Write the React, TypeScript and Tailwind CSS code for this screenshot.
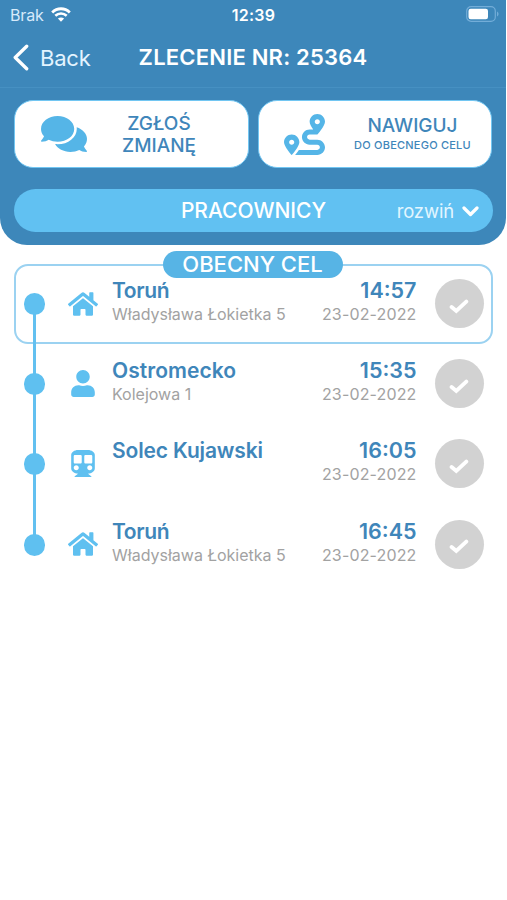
import React from "react";
import { FaComments, FaRoute, FaHome, FaUser, FaSubway } from "react-icons/fa";

type Stop = {
  icon: React.ComponentType<{ className?: string }>;
  iconClass: string;
  city: string;
  cityClass: string;
  address: string;
  time: string;
};

const stops: Stop[] = [
  { icon: FaHome, iconClass: "h-[30px] w-[30px]", city: "Toruń", cityClass: "tracking-[-0.35px]", address: "Władysława Łokietka 5", time: "14:57" },
  { icon: FaUser, iconClass: "h-[27px] w-6", city: "Ostromecko", cityClass: "tracking-[0.05px]", address: "Kolejowa 1", time: "15:35" },
  { icon: FaSubway, iconClass: "h-[27px] w-6", city: "Solec Kujawski", cityClass: "tracking-[-0.15px]", address: "", time: "16:05" },
  { icon: FaHome, iconClass: "h-[30px] w-[30px]", city: "Toruń", cityClass: "tracking-[-0.35px]", address: "Władysława Łokietka 5", time: "16:45" },
];

function StatusBar() {
  return (
    <div className="grid h-[29px] grid-cols-3 items-center pr-[9px] pl-[10px]">
      <div className="flex items-center gap-[7px]">
        <span className="text-[16px] leading-5 tracking-[-0.15px] text-[#d6eafa]">Brak</span>
        <svg className="h-[15px] w-5" viewBox="0 0 20 15" fill="none">
          <path d="M1.2 5.4C6.2.5 13.8.5 18.8 5.4" stroke="white" strokeWidth="2.8" />
          <path d="M4.3 8.8c3.3-3.1 8.1-3.1 11.4 0" stroke="white" strokeWidth="2.6" />
          <path d="M10 14.7 6.9 11.6c1.8-1.6 4.4-1.6 6.2 0Z" fill="white" />
        </svg>
      </div>
      <span className="text-center text-[16px] leading-5 font-semibold tracking-[0.2px] text-white">12:39</span>
      <svg className="mt-[-2px] mr-[-2px] h-4 w-[33px] justify-self-end" viewBox="0 0 33 16" fill="none">
        <rect x=".7" y=".7" width="28.6" height="14.6" rx="4.4" stroke="#73add8" strokeWidth="1.2" />
        <rect x="2.5" y="2.7" width="19.5" height="10.6" rx="2.2" fill="white" />
        <path d="M31 5.5c2 .8 2 4.2 0 5Z" fill="#73add8" />
      </svg>
    </div>
  );
}

function StopRow({ stop, first, last }: { stop: Stop; first: boolean; last: boolean }) {
  const Icon = stop.icon;
  return (
    <div className={`flex h-[80.2px] rounded-[14px] border-2 pl-[8px] ${first ? "border-[#9bd2f1]" : "border-transparent"}`}>
      <div className="relative flex w-[21px] justify-center">
        {!first && <div className="absolute -top-[3px] h-[41px] w-[3px] bg-[#62c0f0]" />}
        {!last && <div className="absolute top-[38px] h-[42px] w-[3px] bg-[#62c0f0]" />}
        <div className="relative mt-[27px] h-[22px] w-[21px] rounded-full bg-[#5fc0f0]" />
      </div>
      <div className="ml-[22px] flex h-[75px] w-[31px] items-center justify-center">
        <Icon className={`${stop.iconClass} text-[#5fc0f0]`} />
      </div>
      <div className="ml-[14px] flex-1 pt-3 whitespace-nowrap">
        <div className={`text-[21px] leading-[26px] font-semibold text-[#3f86ba] ${stop.cityClass}`}>{stop.city}</div>
        <div className="text-[16px] leading-5 text-[#a2a2a2]">{stop.address}</div>
      </div>
      <div className="pt-3 text-right">
        <div className="text-[21.5px] leading-[25px] font-semibold text-[#3f86ba]">{stop.time}</div>
        <div className="text-[16px] leading-[22px] tracking-[0.15px] text-[#a2a2a2]">23-02-2022</div>
      </div>
      <div className="mt-[13px] mr-[7.5px] ml-[18px] flex h-[49px] w-[49px] items-center justify-center rounded-full bg-[#d2d2d2]">
        <svg className="mt-[5px] h-[15px] w-5" viewBox="0 0 20 15" fill="none" stroke="white" strokeWidth="3.9" strokeLinecap="round">
          <path d="M2.6 8 7.3 12 17.3 2.6" />
        </svg>
      </div>
    </div>
  );
}

export default function App() {
  return (
    <div className="h-[900px] w-[507px] overflow-hidden bg-white font-['Inter','Liberation_Sans',sans-serif]">
      <header className="h-[245px] w-[506px] rounded-b-[27px] bg-[#3d87ba]">
        <StatusBar />
        <div className="grid h-[59px] grid-cols-[1fr_auto_1fr] items-center border-b border-[#4690c2]">
          <div className="-mt-px flex items-center gap-[11px] pl-[13px]">
            <svg className="h-[27px] w-4" viewBox="0 0 16 27" fill="none" stroke="white" strokeWidth="3.3" strokeLinecap="round" strokeLinejoin="round">
              <path d="M13.7 2.2 2.2 13.5l11.5 11.3" />
            </svg>
            <span className="text-[22px] leading-7 tracking-[-0.2px] text-[#e4f4ff]">Back</span>
          </div>
          <h1 className="-mt-[2px] text-[22px] leading-7 font-semibold tracking-[0.2px] whitespace-nowrap text-white">ZLECENIE NR: 25364</h1>
          <div />
        </div>
        <div className="flex gap-[9px] px-[14px] pt-3">
          <button className="flex h-[68px] w-[235px] items-center rounded-[19px] border border-[#72c6f2] bg-white pl-[26px]">
            <FaComments className="h-[46px] w-[46px] text-[#55b5e7]" />
            <div className="ml-[24px] w-[96px] pt-px text-center text-[19px] leading-[22px] font-medium text-[#3f86ba]">ZGŁOŚ<br />ZMIANĘ</div>
          </button>
          <button className="flex h-[68px] w-[235px] items-center rounded-[19px] border border-[#72c6f2] bg-white pl-[25px]">
            <FaRoute className="h-[41px] w-[41px] text-[#55b5e7]" />
            <div className="ml-[25px] w-[126px] pt-px text-center whitespace-nowrap text-[#3f86ba]">
              <div className="text-[19px] leading-[22px] font-medium">NAWIGUJ</div>
              <div className="text-[11px] leading-[17px] font-medium tracking-[0.22px]">DO OBECNEGO CELU</div>
            </div>
          </button>
        </div>
        <button className="mt-[21px] ml-[14px] grid h-[43px] w-[479px] grid-cols-[1fr_auto_1fr] items-center rounded-[22px] bg-[#61c1f2] pr-[14px] text-white">
          <span />
          <span className="pl-[14px] text-[21px] font-medium">PRACOWNICY</span>
          <span className="flex items-center justify-end gap-[8px] pt-[2px] text-[18.5px] tracking-[-0.15px] text-[#e2f6ff]">
            rozwiń
            <svg className="h-[11px] w-[17px]" viewBox="0 0 17 11" fill="none" stroke="white" strokeWidth="3.2" strokeLinecap="round" strokeLinejoin="round">
              <path d="m2 2 6.5 6.5L15 2" />
            </svg>
          </span>
        </button>
      </header>
      <main className="relative px-[14px] pt-[19px]">
        <div className="absolute top-[6px] left-[163px] z-10 flex h-[27px] w-[180px] items-center justify-center rounded-full bg-[#57b4e5] pr-px text-[22px] leading-[27px] font-medium whitespace-nowrap text-white">
          OBECNY CEL
        </div>
        <div className="w-[479px]">
          {stops.map((stop, i) => (
            <StopRow key={stop.time} stop={stop} first={i === 0} last={i === stops.length - 1} />
          ))}
        </div>
      </main>
    </div>
  );
}
